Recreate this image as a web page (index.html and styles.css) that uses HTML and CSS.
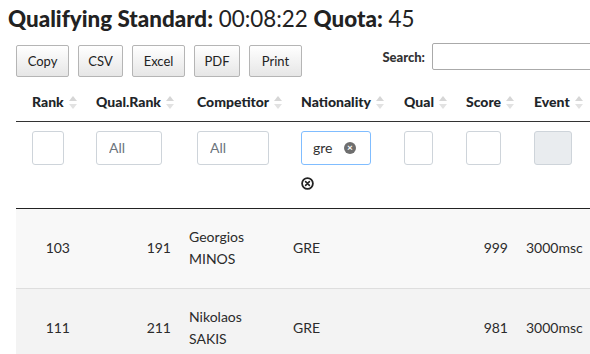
FILE: index.html
```html
<!DOCTYPE html>
<html lang="en">
<head>
	<meta charset="UTF-8">
	<title>Qualifying</title>
	<link rel="stylesheet" href="styles.css">
</head>
<body>
	<h2 class="title"><b>Qualifying Standard:</b> 00:08:22 <b>Quota:</b> 45</h2>
	<div class="toolbar">
		<div class="btns">
			<button>Copy</button>
			<button>CSV</button>
			<button>Excel</button>
			<button>PDF</button>
			<button>Print</button>
		</div>
		<label class="search">Search: <input type="text"></label>
	</div>
	<table class="grid">
		<colgroup>
			<col style="width:64px">
			<col style="width:101px">
			<col style="width:104px">
			<col style="width:103px">
			<col style="width:62px">
			<col style="width:68px">
			<col style="width:72px">
		</colgroup>
		<thead>
			<tr class="heads">
				<th>Rank<i class="sort"></i></th>
				<th>Qual.Rank<i class="sort"></i></th>
				<th>Competitor<i class="sort"></i></th>
				<th>Nationality<i class="sort"></i></th>
				<th>Qual<i class="sort"></i></th>
				<th>Score<i class="sort"></i></th>
				<th>Event<i class="sort"></i></th>
			</tr>
			<tr class="filters">
				<td><input class="f w32"></td>
				<td><input class="f w66" placeholder="All"></td>
				<td><input class="f w72" placeholder="All"></td>
				<td>
					<div class="f w70 focus">gre<span class="clear">×</span></div>
					<svg class="reset" width="13" height="13" viewBox="0 0 13 13"><circle cx="6.5" cy="6.5" r="5.4" fill="none" stroke="#222" stroke-width="1.8"/><path d="M4.6 4.6l3.8 3.8M8.4 4.6l-3.8 3.8" stroke="#222" stroke-width="1.6" stroke-linecap="round"/></svg>
				</td>
				<td><input class="f w29"></td>
				<td><input class="f w35"></td>
				<td><input class="f w38" disabled></td>
			</tr>
		</thead>
		<tbody>
			<tr class="odd">
				<td class="num">103</td>
				<td class="num">191</td>
				<td>Georgios<br>MINOS</td>
				<td>GRE</td>
				<td></td>
				<td class="num">999</td>
				<td>3000msc</td>
			</tr>
			<tr class="even">
				<td class="num">111</td>
				<td class="num">211</td>
				<td>Nikolaos<br>SAKIS</td>
				<td>GRE</td>
				<td></td>
				<td class="num">981</td>
				<td>3000msc</td>
			</tr>
		</tbody>
	</table>
</body>
</html>
```

FILE: styles.css
```css
*{
	padding:0;
	margin:0;
	box-sizing:border-box;
}
body{
	width:590px;
	height:354px;
	overflow:hidden;
	font-family:Lato,"Liberation Sans",sans-serif;
	color:#212529;
	background:#fff;
}
.title{
	font-size:22.4px;
	line-height:28px;
	padding:5px 0 0 8px;
	font-weight:normal;
	color:#222;
}
.title b{
	font-weight:900;
}
.toolbar{
	display:flex;
	justify-content:space-between;
	align-items:flex-start;
	width:602px;
	padding:10px 0 0 16px;
}
.btns{
	display:flex;
	gap:9px;
	margin-top:2px;
}
.btns button{
	height:32px;
	padding:0;
	font-family:inherit;
	font-size:13px;
	color:#222;
	border:1px solid #b5b5b5;
	border-radius:2px;
	background:linear-gradient(#fff,#e6e6e6);
}
.btns button:nth-child(1){width:53px;}
.btns button:nth-child(2){width:45px;}
.btns button:nth-child(3){width:53px;}
.btns button:nth-child(4){width:46px;}
.btns button:nth-child(5){width:53px;}
.search{
	display:flex;
	align-items:center;
	font-size:13px;
	font-weight:900;
	color:#333;
}
.search input{
	width:170px;
	height:27px;
	margin-left:7px;
	border:1px solid #aaa;
	border-radius:2px;
}
.grid{
	table-layout:fixed;
	border-collapse:collapse;
	width:574px;
	margin:5px 0 0 16px;
	font-size:14px;
}
.heads th{
	text-align:left;
	font-weight:900;
	height:39px;
	padding:0 0 0 16px;
	white-space:nowrap;
	border-bottom:1px solid #333;
	vertical-align:middle;
}
.sort{
	position:relative;
	display:inline-block;
	width:8px;
	height:13px;
	margin-left:5px;
	vertical-align:-2px;
}
.sort:before,
.sort:after{
	content:"";
	position:absolute;
	left:0;
	border-left:4px solid transparent;
	border-right:4px solid transparent;
}
.sort:before{
	top:0;
	border-bottom:5px solid #d6d6d6;
}
.sort:after{
	bottom:0;
	border-top:5px solid #e2e2e2;
}
.filters td{
	height:87px;
	padding:9px 0 0 16px;
	vertical-align:top;
	border-bottom:1px solid #222;
}
.f{
	display:block;
	height:34px;
	border:1px solid #ced4da;
	border-radius:3px;
	font-family:inherit;
	font-size:14px;
	padding:0 12px;
	color:#495057;
	background:#fff;
}
.f::placeholder{
	color:#6c757d;
}
.f:disabled{
	background:#e9ecef;
}
.w29{width:29px;}
.w32{width:32px;}
.w35{width:35px;}
.w38{width:38px;}
.w66{width:66px;}
.w70{width:70px;}
.w72{width:72px;}
.focus{
	display:flex;
	align-items:center;
	justify-content:space-between;
	border-color:#80bdff;
	padding:0 14px 0 11px;
	color:#333;
}
.clear{
	width:12px;
	height:12px;
	border-radius:50%;
	background:#6e6e6e;
	color:#fff;
	font-size:10px;
	line-height:11px;
	text-align:center;
	font-weight:bold;
}
.reset{
	display:block;
	margin:12px 0 0 0;
}
tbody td{
	height:80px;
	padding:0 8px;
	line-height:22px;
	vertical-align:middle;
	color:#2b2b2b;
}
tbody td.num{
	text-align:right;
	padding-right:10px;
}
tbody tr.odd td{
	background:#f8f8f8;
	border-bottom:1px solid #dedede;
}
tbody tr.even td{
	background:#f3f3f3;
}
```
